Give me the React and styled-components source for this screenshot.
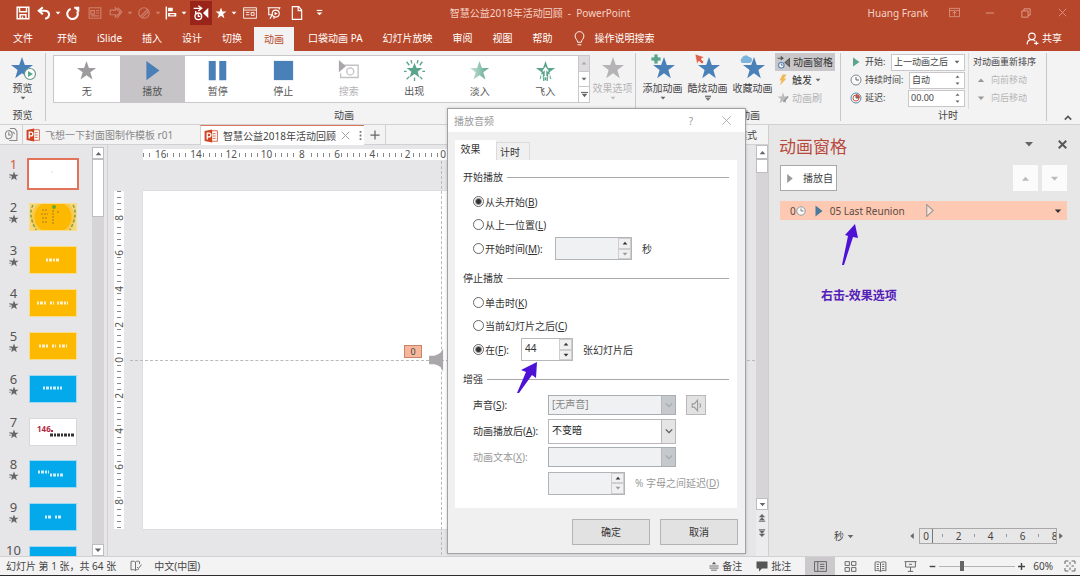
import React from 'react'
import styled, { createGlobalStyle, css } from 'styled-components'

const GlobalStyle = createGlobalStyle`
    * {
        box-sizing: border-box;
    }

    body {
        margin: 0;
        overflow: hidden;
        font: 10px/14px "Noto Sans", "Noto Sans CJK SC", sans-serif;
        color: #444;
    }

    button, input, select {
        font: inherit;
        color: inherit;
        margin: 0;
        padding: 0;
        border: 0;
        background: none;
        border-radius: 0;
    }

    svg {
        display: block;
        flex: none;
    }
`

const ORANGE = '#b7472a'
const BLUE = '#4a80b8'
const GREEN = '#5aa58c'

const Window = styled.div`
    display: flex;
    flex-direction: column;
    height: 100vh;
    background: #e6e5e7;
    border-bottom: 1px solid #2d2b2d;
    white-space: nowrap;
`

/* ---------- icons ---------- */

const STAR = '12,1 14.8,9 23,9 16.4,14 18.8,22.3 12,17.3 5.2,22.3 7.6,14 1,9 9.2,9'

const Icon = ({ size = 16, w, h, box = 24, children }) => (
    <svg width={w || size} height={h || size} viewBox={`0 0 ${box} ${box}`} fill="none" aria-hidden="true">
        {children}
    </svg>
)

const Star = ({ size, fill, children }) => (
    <Icon size={size}>
        <polygon points={STAR} fill={fill} />
        {children}
    </Icon>
)

const Caret = ({ up, size = 6, fill = '#666' }) => (
    <Icon size={size} box={10}>
        <path d={up ? 'M1 7.5h8L5 3z' : 'M1 3h8L5 7.5z'} fill={fill} />
    </Icon>
)

const Clock = ({ size = 13, red }) => (
    <Icon size={size}>
        <circle cx="12" cy="12" r="10" fill="#fafafa" stroke={red ? '#5b87ab' : '#7d8a94'} strokeWidth="2" />
        {red && <path d="M12 12V4a8 8 0 0 1 8 8z" fill="#d9573f" />}
        {red && <circle cx="12" cy="12" r="6" stroke="#d9573f" strokeWidth="2" />}
        <path d="M12 6v6h6" stroke="#666" strokeWidth="2" />
    </Icon>
)

const PptLogo = () => (
    <Icon size={14}>
        <path d="M12 3h11v18H12z" fill="#fff" stroke="#d2573a" strokeWidth="1.5" />
        <path d="M15 8h5M15 12h5M15 16h5" stroke="#d2573a" strokeWidth="1.5" />
        <path d="M1 3.5 14 1v22L1 20.5z" fill="#d04424" />
        <path d="M5.5 18V7h3a3 3 0 0 1 0 6.500h-3" stroke="#fff" strokeWidth="2.200" />
    </Icon>
)

/* ---------- title bar ---------- */

const TitleBar = styled.header`
    display: grid;
    grid-template-columns: 1fr auto 1fr;
    height: 27px;
    flex: none;
    background: ${ORANGE};
    color: #f6d3c7;
`

const QuickAccess = styled.div`
    display: flex;
    height: 25px;
    padding-left: 11px;
`

const QuickButton = styled.button`
    display: flex;
    align-items: center;
    justify-content: center;
    width: ${p => p.$w || 22}px;
    opacity: ${p => (p.disabled ? 0.3 : 1)};
    ${p => p.$on && css`
        margin: 1px 0 0 2px;
        background: #98241a;
    `}
`

const WindowTitle = styled.div`
    align-self: center;
    padding-bottom: 2px;
`

const WindowTools = styled.div`
    display: flex;
    justify-content: flex-end;
    align-items: center;
    padding-bottom: 2px;
`

const UserName = styled.span`
    margin-right: 8px;
`

const WindowButton = styled.button`
    display: flex;
    justify-content: center;
    width: 36px;
    opacity: 0.7;
`

const WHITE = { stroke: '#fff', strokeWidth: 2 }

const Title = () => (
    <TitleBar>
        <QuickAccess>
            <QuickButton $w={23} aria-label="保存">
                <Icon size={14}><path d="M2 2h20v20H2zM6 2v8h12V2M7 22v-7h10v7M11 18v4" {...WHITE} strokeWidth="2.500" /></Icon>
            </QuickButton>
            <QuickButton $w={20} aria-label="撤消">
                <Icon size={14}><path d="M10 2 3 8l7 6M4 8h9c10 0 10 12 1 14" {...WHITE} strokeWidth="3.500" /></Icon>
            </QuickButton>
            <QuickButton $w={8} aria-label="撤消列表"><Caret fill="#fff" /></QuickButton>
            <QuickButton aria-label="重复">
                <Icon size={14}><path d="M14 3h7v7M20 4c-1 1-2 3-2 3M8 5a9 9 0 1 0 11 4" {...WHITE} strokeWidth="3.500" /></Icon>
            </QuickButton>
            <QuickButton disabled aria-label="版式">
                <Icon size={14}><path d="M2 3h20v18H2zM5 8h6v6H5zM14 8h5M14 12h5M5 17h14" {...WHITE} /></Icon>
            </QuickButton>
            <QuickButton $w={20} disabled aria-label="形状">
                <Icon size={14}><path d="M2 7h9V3l8 8-8 8v-4H2zM15 3l7 7-8 11" {...WHITE} /></Icon>
            </QuickButton>
            <QuickButton $w={8} disabled aria-label="形状列表"><Caret fill="#fff" /></QuickButton>
            <QuickButton $w={20} disabled aria-label="轮廓">
                <Icon size={14}><circle cx="12" cy="12" r="9" {...WHITE} /><path d="M6 18 18 6M9 20 20 9" {...WHITE} /></Icon>
            </QuickButton>
            <QuickButton $w={8} disabled aria-label="轮廓列表"><Caret fill="#fff" /></QuickButton>
            <QuickButton $w={18} aria-label="对齐">
                <Icon size={14}><path d="M4 1v22" {...WHITE} strokeWidth="2.500" /><path d="M7 3h8v6H7zM7 12h14v6H7z" fill="#fff" /><path d="M10 14h8v2h-8z" fill={ORANGE} /></Icon>
            </QuickButton>
            <QuickButton $w={8} aria-label="对齐列表"><Caret fill="#fff" /></QuickButton>
            <QuickButton $on aria-label="动画窗格">
                <Icon size={16}>
                    <path d="M1 5h11M8 1l5 4-5 4M4 9v4" {...WHITE} />
                    <circle cx="8" cy="17" r="5" {...WHITE} />
                    <path d="M8 14v3h3" {...WHITE} />
                    <path d="M23 4v16l-8-8z" fill="#fff" />
                </Icon>
            </QuickButton>
            <QuickButton $w={18} aria-label="动画样式"><Star size={12} fill="#fff" /></QuickButton>
            <QuickButton $w={8} aria-label="动画样式列表"><Caret fill="#fff" /></QuickButton>
            <QuickButton $w={24} aria-label="选择窗格">
                <Icon size={14}><path d="M1 3h22v18H1zM1 7h22M5 11h6M5 15h6M14 11h5v5h-5z" {...WHITE} strokeWidth="1.500" /></Icon>
            </QuickButton>
            <QuickButton $w={24} aria-label="从头开始放映">
                <Icon size={14}><path d="M1 3h22M3 3v12h6M21 3v3M9 15l-4 7M12 19v3" {...WHITE} /><circle cx="15" cy="13" r="6" {...WHITE} /><path d="M13 10v6l5-3z" fill="#fff" /></Icon>
            </QuickButton>
            <QuickButton aria-label="新建">
                <Icon size={14}><path d="M4 1h11l5 6v16H4zM14 1v7h6" {...WHITE} /></Icon>
            </QuickButton>
            <QuickButton aria-label="自定义快速访问工具栏">
                <Icon size={7} box={10}><path d="M1 2h8" stroke="#fff" strokeWidth="1.500" /><path d="M1 5h8L5 9z" fill="#fff" /></Icon>
            </QuickButton>
        </QuickAccess>
        <WindowTitle>智慧公益2018年活动回顾 &nbsp;-&nbsp; PowerPoint</WindowTitle>
        <WindowTools>
            <UserName>Huang Frank</UserName>
            <WindowButton aria-label="功能区显示选项"><Icon size={11}><path d="M1 3h22v18H1zM1 8h22M12 19v-8M8 14l4-4 4 4" stroke="#f6d3c7" strokeWidth="1.500" /></Icon></WindowButton>
            <WindowButton aria-label="最小化"><Icon size={10}><path d="M2 12h20" stroke="#f6d3c7" strokeWidth="2" /></Icon></WindowButton>
            <WindowButton aria-label="还原"><Icon size={10}><path d="M2 7h15v15H2zM7 7V2h15v15h-5" stroke="#f6d3c7" strokeWidth="2" /></Icon></WindowButton>
            <WindowButton aria-label="关闭"><Icon size={9}><path d="m2 2 20 20M22 2 2 22" stroke="#f6d3c7" strokeWidth="2" /></Icon></WindowButton>
        </WindowTools>
    </TitleBar>
)

/* ---------- ribbon tabs ---------- */

const TabBar = styled.nav`
    display: flex;
    height: 24px;
    flex: none;
    padding: 0 18px 2px 3px;
    background: ${ORANGE};
    color: #fff;
`

const RibbonTab = styled.button`
    padding: 0 10px;
    ${p => p.$file && css`
        margin-right: 4px;
    `}
    ${p => p.$active && css`
        margin: 0 4px -2px 2px;
        background: #f4f3f4;
        color: ${ORANGE};
    `}
`

const TellMe = styled.button`
    display: flex;
    align-items: center;
    gap: 8px;
    margin-left: 9px;
`

const Share = styled(TellMe)`
    gap: 3px;
    margin-left: auto;
`

const TABS = ['文件', '开始', 'iSlide', '插入', '设计', '切换', '动画', '口袋动画 PA', '幻灯片放映', '审阅', '视图', '帮助']

const Tabs = () => (
    <TabBar>
        {TABS.map(name => (
            <RibbonTab key={name} $file={name === '文件'} $active={name === '动画'}>{name}</RibbonTab>
        ))}
        <TellMe>
            <Icon size={15}><path d="M9 18c0-4-4-5-4-10a7 7 0 0 1 14 0c0 5-4 6-4 10zM9 22h6" stroke="#fff" strokeWidth="1.500" /></Icon>
            操作说明搜索
        </TellMe>
        <Share>
            <Icon size={13}><circle cx="11" cy="8" r="6" stroke="#fff" strokeWidth="2" /><path d="M2 23c0-6 4-9 9-9 3 0 5 1 6 3M15 21h8M19 17v7" stroke="#fff" strokeWidth="2" /></Icon>
            共享
        </Share>
    </TabBar>
)

/* ---------- ribbon ---------- */

const RibbonBar = styled.section`
    display: flex;
    flex: none;
    height: 74px;
    background: #f4f3f4;
    border-bottom: 1px solid #d2d0d2;
`

const Group = styled.div`
    display: flex;
    flex-direction: column;
    flex: ${p => (p.$grow ? '1' : 'none')};
    min-width: 0;
    width: ${p => (p.$w ? p.$w + 'px' : 'auto')};
    margin: 2px 0 3px;
    padding-left: ${p => p.$pad || 0}px;
    border-right: 1px solid #c9c7c9;
`

const GroupBody = styled.div`
    display: flex;
    flex: 1;
    min-height: 0;
`

const GroupLabel = styled.div`
    line-height: 12px;
    text-align: center;
`

const BigButton = styled.button`
    display: flex;
    flex-direction: column;
    align-items: center;
    flex: none;
    width: 45px;
    line-height: 14px;
    color: ${p => (p.disabled ? '#b5b3b5' : '#444')};
`

const Gallery = styled.div`
    display: flex;
    flex: 1;
    height: 48px;
    margin-top: 2px;
    background: #fff;
    border: 1px solid #c9c7c9;
`

const Effect = styled.button`
    display: flex;
    flex-direction: column;
    align-items: center;
    flex: 1;
    gap: 3px;
    padding-top: 4px;
    color: ${p => (p.disabled ? '#b5b3b5' : '#555')};
    background: ${p => (p.$on ? '#c6c4c6' : 'none')};
`

const GalleryScroll = styled.div`
    display: flex;
    flex-direction: column;
    width: 11px;
    border-left: 1px solid #c9c7c9;
`

const ScrollStep = styled.button`
    display: flex;
    flex: 1;
    align-items: center;
    justify-content: center;
    background: ${p => (p.disabled ? '#dddbdd' : '#fff')};

    & + & {
        border-top: 1px solid #c9c7c9;
    }
`

const SmallButtons = styled.div`
    display: flex;
    flex-direction: column;
    width: 60px;
`

const SmallButton = styled.button`
    display: flex;
    align-items: center;
    gap: 3px;
    height: 18px;
    padding-left: 2px;
    color: ${p => (p.disabled ? '#b5b3b5' : '#333')};
    background: ${p => (p.$on ? '#c9c7c9' : 'none')};
`

const Timing = styled.div`
    display: flex;
    flex-direction: column;
    width: 115px;
    font-size: 9px;
`

const TimingRow = styled.label`
    display: flex;
    align-items: center;
    gap: 3px;
    height: 18px;
`

const TimingField = styled.span`
    display: flex;
    align-items: center;
    justify-content: space-between;
    width: ${p => p.$w}px;
    height: 17px;
    margin-left: auto;
    padding: 0 4px 0 2px;
    background: #fff;
    border: 1px solid #c9c7c9;

    input, select {
        flex: 1;
        min-width: 0;
        appearance: none;
        outline: none;
    }
`

const Stepper = styled.span`
    display: flex;
    flex-direction: column;
    gap: 2px;
`

const Reorder = styled.div`
    display: flex;
    flex-direction: column;
    margin-left: 3px;
    padding-left: 4px;
    border-left: 1px solid #dddbdd;
    font-size: 9px;
    line-height: 18px;
`

const ReorderButton = styled.button`
    display: flex;
    align-items: center;
    gap: 6px;
    height: 18px;
    padding-left: 4px;
    color: #b5b3b5;
`

const Collapse = styled.button`
    display: flex;
    align-self: flex-end;
    justify-content: flex-end;
    width: 33px;
    padding: 0 8px 2px 0;
`

const PlayShape = <path d="M5 1v22l15-11z" fill={BLUE} />

const EFFECTS = [
    { name: '无', icon: <Star size={21} fill="#9d9b9d" /> },
    { name: '播放', on: true, icon: <Icon size={21}>{PlayShape}</Icon> },
    { name: '暂停', icon: <Icon size={21}><path d="M2 1h8v22H2zM14 1h8v22h-8z" fill={BLUE} /></Icon> },
    { name: '停止', icon: <Icon size={21}><path d="M1 1h22v22H1z" fill={BLUE} /></Icon> },
    {
        name: '搜索',
        disabled: true,
        icon: (
            <Icon size={21}>
                <path d="M7 6h16v14H3v-5" stroke="#c3c1c3" strokeWidth="1.500" />
                <circle cx="14" cy="13" r="4" stroke="#c3c1c3" strokeWidth="1.500" />
                <path d="M1 0v14l8-7z" fill="#a9a7a9" />
            </Icon>
        ),
    },
    {
        name: '出现',
        icon: (
            <Icon size={21}>
                <polygon points="12,3 14.300,9.200 21,9.200 15.600,13.300 17.600,20 12,16 6.400,20 8.400,13.300 3,9.200 9.700,9.200" fill={GREEN} />
                <path d="m3 2 3 4M21 2l-3 4M0 13h3M21 13h3M3 22l3-3M21 22l-3-3M8 0l1 4M16 0l-1 4M12 20v4" stroke={GREEN} strokeWidth="1.500" />
            </Icon>
        ),
    },
    {
        name: '淡入',
        icon: (
            <Star size={21} fill="url(#fade)">
                <defs>
                    <linearGradient id="fade">
                        <stop offset="0" stopColor="#cfe4dc" />
                        <stop offset="1" stopColor="#5aa58c" />
                    </linearGradient>
                </defs>
            </Star>
        ),
    },
    {
        name: '飞入',
        icon: (
            <Star size={21} fill={GREEN}>
                <path d="M12 18V10M9 13l3-4 3 4M8 21v-5M16 21v-5" stroke="#fff" strokeWidth="1.800" />
                <path d="M10 24v-5M14 24v-5M12 23v-3" stroke={GREEN} strokeWidth="1.500" />
            </Star>
        ),
    },
]

const Ribbon = () => (
    <RibbonBar>
        <Group $w={46}>
            <GroupBody>
                <BigButton>
                    <Icon size={28} box={28}>
                        <polygon points={STAR} fill={BLUE} transform="translate(1 3)" />
                        <circle cx="21" cy="21" r="5.500" fill="#fff" stroke="#6a9a88" strokeWidth="1.200" />
                        <path d="M19 18v6l5-3z" fill={GREEN} />
                    </Icon>
                    预览
                    <Caret />
                </BigButton>
            </GroupBody>
            <GroupLabel>预览</GroupLabel>
        </Group>

        <Group $grow $pad={7}>
            <GroupBody>
                <Gallery>
                    {EFFECTS.map(e => (
                        <Effect key={e.name} $on={e.on} disabled={e.disabled}>
                            {e.icon}
                            {e.name}
                        </Effect>
                    ))}
                    <GalleryScroll>
                        <ScrollStep disabled aria-label="上一行"><Caret up fill="#aaa" /></ScrollStep>
                        <ScrollStep aria-label="下一行"><Caret /></ScrollStep>
                        <ScrollStep aria-label="其他"><Icon size={7} box={10}><path d="M0 2h10" stroke="#666" strokeWidth="1.500" /><path d="M1 4h8L5 9z" fill="#666" /></Icon></ScrollStep>
                    </GalleryScroll>
                </Gallery>
                <BigButton disabled>
                    <Icon size={28} box={28}><polygon points={STAR} fill="#b5b3b5" transform="translate(2 3)" /></Icon>
                    效果选项
                    <Caret fill="#bbb" />
                </BigButton>
            </GroupBody>
            <GroupLabel>动画</GroupLabel>
        </Group>

        <Group $w={205} $pad={4}>
            <GroupBody>
                <BigButton>
                    <Icon size={28} box={28}>
                        <polygon points={STAR} fill={BLUE} transform="translate(3 3)" />
                        <path d="M5 1h4v3h3v4H9v3H5V8H2V4h3z" fill={GREEN} stroke="#f4f3f4" strokeWidth=".8" />
                    </Icon>
                    添加动画
                    <Caret />
                </BigButton>
                <BigButton>
                    <Icon size={28} box={28}>
                        <polygon points={STAR} fill={BLUE} transform="translate(3 3)" />
                        <path d="m1 1 9 3-3 2 3 3-2 2-3-3-2 3z" fill="#e0604a" stroke="#f4f3f4" strokeWidth=".6" />
                    </Icon>
                    酷炫动画
                    <Icon size={6} box={10}><path d="M0 1h10v3H0z" fill="#777" /><path d="M1 5h8L5 10z" fill="#777" /></Icon>
                </BigButton>
                <BigButton>
                    <Icon size={28} box={28}>
                        <polygon points={STAR} fill={BLUE} transform="translate(3 3)" />
                        <path d="M3 10a3 3 0 0 1 0-5 4 4 0 0 1 7-1 3 3 0 0 1 0 6z" fill="#7db4dc" />
                    </Icon>
                    收藏动画
                </BigButton>
                <SmallButtons>
                    <SmallButton $on>
                        <Icon size={13}>
                            <path d="M1 4h10M7 1l4 3-4 3M23 5v14l-8-7z" stroke="#555" strokeWidth="2" fill="#777" />
                            <circle cx="8" cy="17" r="5" fill="#fff" stroke={BLUE} strokeWidth="2" />
                            <path d="M8 14v3h3" stroke="#555" strokeWidth="1.500" />
                        </Icon>
                        动画窗格
                    </SmallButton>
                    <SmallButton>
                        <Icon size={12}><path d="M11 1h8l-5 8h5L6 23l3-10H5z" fill="#f0b95a" /></Icon>
                        触发
                        <Caret />
                    </SmallButton>
                    <SmallButton disabled>
                        <Star size={12} fill="#bbb"><path d="m22 9-9 11" stroke="#8f8d8f" strokeWidth="2.500" /></Star>
                        动画刷
                    </SmallButton>
                </SmallButtons>
            </GroupBody>
            <GroupLabel>高级动画</GroupLabel>
        </Group>

        <Group $w={206} $pad={9}>
            <GroupBody>
                <Timing>
                    <TimingRow>
                        <Icon size={12}><path d="M6 3v18l13-9z" fill={GREEN} /></Icon>
                        开始:
                        <TimingField $w={74}>
                            <select><option>上一动画之后</option></select>
                            <Caret />
                        </TimingField>
                    </TimingRow>
                    <TimingRow>
                        <Clock size={12} />
                        持续时间:
                        <TimingField $w={56}>
                            <input defaultValue="自动" />
                            <Stepper><Caret up size={5} /><Caret size={5} /></Stepper>
                        </TimingField>
                    </TimingRow>
                    <TimingRow>
                        <Clock size={12} red />
                        延迟:
                        <TimingField $w={57}>
                            <input defaultValue="00.00" />
                            <Stepper><Caret up size={5} /><Caret size={5} /></Stepper>
                        </TimingField>
                    </TimingRow>
                </Timing>
                <Reorder>
                    对动画重新排序
                    <ReorderButton disabled><Caret up size={8} fill="#999" />向前移动</ReorderButton>
                    <ReorderButton disabled><Caret size={8} fill="#999" />向后移动</ReorderButton>
                </Reorder>
            </GroupBody>
            <GroupLabel>计时</GroupLabel>
        </Group>
        <Collapse aria-label="折叠功能区"><Icon size={8} box={10}><path d="m1 7 4-4 4 4" stroke="#555" strokeWidth="2" /></Icon></Collapse>
    </RibbonBar>
)

/* ---------- document tabs ---------- */

const Body = styled.div`
    display: flex;
    flex: 1;
    min-height: 0;
`

const Main = styled.main`
    display: flex;
    flex-direction: column;
    flex: 1;
    min-width: 0;
    border-right: 1px solid #cfcdcf;
`

const DocTabs = styled.div`
    display: flex;
    height: 20px;
    flex: none;
    background: #f4f3f4;
    border-bottom: 1px solid #d2d0d2;
`

const DocTab = styled.button`
    display: flex;
    align-items: center;
    gap: 5px;
    width: ${p => p.$w}px;
    padding-left: 3px;
    color: #888;
    border-left: 1px solid #d2d0d2;
    ${p => p.$active && css`
        background: #fff;
        color: #444;
        border-top: 1px solid #d9775c;
        margin-bottom: -1px;
    `}
`

const TabTool = styled.button`
    display: flex;
    align-items: center;
    justify-content: center;
    width: 22px;
    ${p => p.$line && css`
        border-right: 1px solid #d2d0d2;
    `}
`

const TabIcons = styled.span`
    display: flex;
    align-items: center;
    gap: 9px;
    margin-left: auto;
    padding-right: 5px;
`

const ModeButton = styled.button`
    margin-left: auto;
    padding-right: 11px;
`

/* ---------- slide list ---------- */

const Workspace = styled.div`
    display: flex;
    flex: 1;
    min-height: 0;
`

const SlidePanel = styled.aside`
    display: flex;
    width: 108px;
    flex: none;
    padding: 2px 3px 0 0;
    border-right: 1px solid #d2d0d2;
`

const SlideList = styled.ol`
    flex: 1;
    display: flex;
    flex-direction: column;
    margin: 0;
    padding: 6px 0 0;
    overflow: hidden;
    list-style: none;
`

const SlideItem = styled.li`
    display: flex;
    align-items: center;
    flex: 0 0 calc(100% / 9.4);
`

const SlideNumber = styled.span`
    display: flex;
    flex-direction: column;
    align-items: center;
    width: 27px;
    padding-bottom: 10px;
    font-size: 13px;
    line-height: 14px;
    color: ${p => (p.$current ? '#d2593c' : '#555')};
`

const Thumb = styled.span`
    width: 48px;
    height: 28px;
    margin-left: 2px;
    background: ${p => p.$color};
    border: 1px solid ${p => p.$edge};
    ${p => p.$current && css`
        width: 52px;
        height: 32px;
        margin-left: 0;
        border: 2px solid #e0735a;
    `}
`

const Count = styled.tspan`
    font-size: 8px;
    font-weight: 700;
`

const SCRIBBLE = { stroke: '#fff', strokeWidth: 3, strokeDasharray: '2 1 3 1', opacity: 0.8 }

const THUMB_ART = {
    1: <path d="M22 12h2" stroke="#ddd" />,
    2: (
        <>
            <path d="M0 0h46v26H0z" fill="#f7d777" />
            <ellipse cx="23" cy="13" rx="20" ry="18" fill="#fdb900" stroke="#f9c94e" strokeWidth="3" />
            <path d="M3 1c-4 7-2 16 3 25M43 1c4 7 2 16-3 25" stroke="#7aa04a" strokeWidth="1.500" strokeDasharray="3 2" />
            <path d="M12 6h6M11 10h7M12 14h5M12 18h6M23 6v14M27 8h3" stroke="#a8762a" strokeDasharray="2 1" />
            <circle cx="24" cy="3" r="2" fill="#6aa82e" />
        </>
    ),
    3: <path d="M16 13h13" {...SCRIBBLE} />,
    4: <path d="M7 13h10M20 13h4M27 13h11" {...SCRIBBLE} />,
    5: <path d="M9 13h9M22 13h4M29 13h8" {...SCRIBBLE} />,
    6: <path d="M13 12h19" {...SCRIBBLE} />,
    7: (
        <>
            <text x="7" y="13" fill="#b3273c"><Count>146</Count></text>
            <path d="M21 12h2" stroke="#b3273c" strokeWidth="2" />
            <path d="M20 16h24" stroke="#333" strokeWidth="3" strokeDasharray="3 1 2 1" />
        </>
    ),
    8: <path d="M8 11h11M20 14h14" {...SCRIBBLE} />,
    9: <path d="M15 13h7M25 13h7" {...SCRIBBLE} />,
    10: <path d="M10 12h26" {...SCRIBBLE} />,
}

const YELLOW = { color: '#fdb900', edge: '#f9dc8c' }
const SKY = { color: '#03a9ea', edge: '#9fd8ef' }
const PAPER = { color: '#fff', edge: '#d9d7d9' }
const SLIDES = [PAPER, YELLOW, YELLOW, YELLOW, YELLOW, SKY, PAPER, SKY, SKY, SKY]

const ScrollBar = styled.div`
    display: flex;
    flex-direction: column;
    width: 12px;
    flex: none;
    background: #d6d4d7;
`

const ScrollButton = styled.button`
    display: flex;
    align-items: center;
    justify-content: center;
    height: ${p => p.$h || 11}px;
    background: ${p => (p.$plain ? '#ecebed' : '#fff')};
    border: ${p => (p.$plain ? '0' : '1px solid #bfbdbf')};
`

const ScrollThumb = styled.div`
    height: ${p => p.$h}px;
    margin-bottom: auto;
    background: #fff;
    border: 1px solid #bfbdbf;
`

const Slides = () => (
    <SlidePanel>
        <SlideList>
            {SLIDES.map((slide, i) => (
                <SlideItem key={i}>
                    <SlideNumber $current={i === 0}>
                        {i + 1}
                        <Icon size={10}><polygon points={STAR} fill="#666" /><path d="M0 9h7M0 15h6" stroke="#888" strokeWidth="2" /></Icon>
                    </SlideNumber>
                    <Thumb $color={slide.color} $edge={slide.edge} $current={i === 0}>
                        <svg width="46" height="26" viewBox="0 0 46 26" fill="none" aria-hidden="true">{THUMB_ART[i + 1]}</svg>
                    </Thumb>
                </SlideItem>
            ))}
        </SlideList>
        <ScrollBar>
            <ScrollButton $h={12} aria-label="向上滚动"><Caret up size={7} /></ScrollButton>
            <ScrollThumb $h={58} />
            <ScrollButton $h={12} aria-label="向下滚动"><Caret size={8} /></ScrollButton>
        </ScrollBar>
    </SlidePanel>
)

/* ---------- editor ---------- */

const Editor = styled.section`
    display: flex;
    flex: 1;
    min-width: 0;
`

const Stage = styled.div`
    flex: 1;
    display: grid;
    grid-template-columns: 10px 1fr;
    grid-template-rows: 11px 1fr;
    gap: 31px 19px;
    padding: 4px 17px 27px 6px;
`

const ruler = css`
    display: flex;
    font-size: 10px;
    line-height: 11px;
    color: #555;
    background-color: #fff;
    background-repeat: no-repeat;
    background-position: center;
`

const RulerX = styled.div`
    ${ruler}
    grid-column: 2;
    margin-right: -4px;
    background-image: repeating-linear-gradient(90deg, #888 0 1px, transparent 1px 6px);
    background-size: 100% 4px;
`

const RulerY = styled.div`
    ${ruler}
    flex-direction: column;
    padding: 9px 0;
    background-image: repeating-linear-gradient(#888 0 1px, transparent 1px 6px);
    background-size: 4px 100%;
`

const Mark = styled.span`
    display: flex;
    flex: 1;
    align-items: center;
    justify-content: center;

    b {
        font-weight: 400;
        padding: 0 1px;
        background: #fff;
        ${p => p.$vertical && css`
            writing-mode: vertical-rl;
            transform: rotate(180deg);
            line-height: 10px;
            padding: 1px 0;
        `}
    }
`

const Slide = styled.div`
    position: relative;
    background: #fff;
    box-shadow: 0 0 1px #aaa;
`

const GuideX = styled.div`
    position: absolute;
    top: 50%;
    left: -13px;
    right: -16px;
    border-top: 1px dashed #bbb9bb;
`

const GuideY = styled.div`
    position: absolute;
    left: 50%;
    top: -30px;
    bottom: -26px;
    border-left: 1px dashed #bbb9bb;
`

const OrderBadge = styled.div`
    position: absolute;
    top: calc(50% - 15px);
    left: calc(50% - 37px);
    width: 18px;
    height: 13px;
    line-height: 11px;
    text-align: center;
    font-size: 9px;
    background: #f7b79c;
    border: 1px solid #c98468;
`

const AudioObject = styled.div`
    position: absolute;
    top: calc(50% - 13px);
    left: calc(50% - 13px);
`

const range = max => Array.from({ length: max + 1 }, (_, i) => Math.abs(max - i * 2))

const SlideEditor = () => (
    <Editor>
        <Stage>
            <RulerX>{range(16).map((n, i) => <Mark key={i}><b>{n}</b></Mark>)}</RulerX>
            <RulerY>{range(8).map((n, i) => <Mark key={i} $vertical><b>{n}</b></Mark>)}</RulerY>
            <Slide>
                <GuideX />
                <GuideY />
                <OrderBadge>0</OrderBadge>
                <AudioObject>
                    <Icon size={26}><path d="M1 8h5c4-1 7-3 8-7v22c-1-4-4-6-8-7H1z" fill="#a9a7a9" /></Icon>
                </AudioObject>
            </Slide>
        </Stage>
        <ScrollBar>
            <ScrollButton $h={14} aria-label="向上滚动"><Caret up size={7} /></ScrollButton>
            <ScrollThumb $h={14} />
            <ScrollButton $h={12} aria-label="向下滚动"><Caret size={7} /></ScrollButton>
            <ScrollButton $plain $h={15} aria-label="上一张幻灯片"><Icon size={8} box={10}><path d="M1 4h8L5 0zM1 8h8L5 4z" fill="#666" /><path d="M1 9.500h8" stroke="#666" /></Icon></ScrollButton>
            <ScrollButton $plain $h={15} aria-label="下一张幻灯片"><Icon size={8} box={10}><path d="M1 2h8L5 6zM1 6h8l-4 4z" fill="#666" /><path d="M1 .5h8" stroke="#666" /></Icon></ScrollButton>
            <ScrollButton as="span" $plain $h={16} />
        </ScrollBar>
    </Editor>
)

/* ---------- animation pane ---------- */

const Pane = styled.aside`
    display: flex;
    flex-direction: column;
    flex: none;
    width: 311px;
    padding: 11px 13px 12px 11px;
    background: #e8e7e8;
`

const PaneHeader = styled.div`
    display: flex;
    align-items: center;
    gap: 24px;
    height: 22px;
    margin-bottom: 7px;

    h2 {
        margin: 0 auto 0 -1px;
        font-size: 17px;
        font-weight: 400;
        line-height: 22px;
        color: #b84a3c;
    }

    button {
        padding-bottom: 6px;
    }
`

const PaneTools = styled.div`
    display: flex;
    gap: 4px;
    height: 26px;
    margin-bottom: 10px;
`

const PlayFrom = styled.button`
    display: flex;
    align-items: center;
    gap: 8px;
    width: 57px;
    margin-right: auto;
    padding-left: 3px;
    background: #fff;
    border: 1px solid #a9a7a9;
`

const MoveButton = styled.button`
    display: flex;
    align-items: center;
    justify-content: center;
    width: 25px;
    background: #fbfbfb;
`

const AnimationItem = styled.button`
    display: flex;
    align-items: center;
    height: 19px;
    padding: 0 5px 0 10px;
    background: #fdc9b2;
    color: #5c4a44;
`

const ItemName = styled.span`
    margin: 0 19px 0 6px;
`

const ItemPlay = styled.span`
    margin-left: 6px;
`

const ItemCaret = styled.span`
    margin-left: auto;
`

const Timeline = styled.div`
    display: flex;
    align-items: center;
    margin-top: auto;
    padding-right: 3px;
`

const UnitButton = styled.button`
    display: flex;
    align-items: center;
    gap: 3px;
    margin: 0 auto 0 54px;
`

const Scale = styled.div`
    display: flex;
    width: 138px;
    height: 16px;
    margin: 0 1px 0 4px;
    overflow: hidden;
    line-height: 14px;
    border: 1px solid #a9a7a9;
`

const ScaleMark = styled.span`
    flex: 0 0 32px;
    display: flex;
    justify-content: space-between;

    i {
        width: 13px;
        text-align: center;
        font-style: normal;
    }

    &:first-child i {
        border-right: 1px solid #777;
    }

    &::after {
        content: "";
        width: 1px;
        height: 3px;
        margin: 5px 9px 0 0;
        background: #999;
    }
`

const AnimationPane = () => (
    <Pane>
        <PaneHeader>
            <h2>动画窗格</h2>
            <button aria-label="任务窗格选项"><Caret size={10} /></button>
            <button aria-label="关闭窗格"><Icon size={9}><path d="m2 2 20 20M22 2 2 22" stroke="#555" strokeWidth="5" /></Icon></button>
        </PaneHeader>
        <PaneTools>
            <PlayFrom><Icon size={11}><path d="M7 2v20l12-10z" fill="#999" /></Icon>播放自</PlayFrom>
            <MoveButton disabled aria-label="上移"><Caret up size={9} fill="#bbb" /></MoveButton>
            <MoveButton disabled aria-label="下移"><Caret size={9} fill="#bbb" /></MoveButton>
        </PaneTools>
        <AnimationItem>
            0
            <Clock size={10} />
            <ItemPlay><Icon size={12}><path d="M7 1v22l14-11z" fill="#4a7a9c" /></Icon></ItemPlay>
            <ItemName>05 Last Reunion</ItemName>
            <Icon size={13}><path d="M5 1v22l12-11z" fill="#fbe0d5" stroke="#999" strokeWidth="2" /></Icon>
            <ItemCaret><Caret size={8} fill="#333" /></ItemCaret>
        </AnimationItem>
        <Timeline>
            <UnitButton>秒<Caret size={7} /></UnitButton>
            <Icon size={6} box={10}><path d="M8 0v10L2 5z" fill="#666" /></Icon>
            <Scale>
                {[0, 2, 4, 6, 8].map(n => <ScaleMark key={n}><i>{n}</i></ScaleMark>)}
            </Scale>
            <Icon size={6} box={10}><path d="M2 0v10l6-5z" fill="#666" /></Icon>
        </Timeline>
    </Pane>
)

/* ---------- status bar ---------- */

const StatusBar = styled.footer`
    display: flex;
    align-items: center;
    height: 19px;
    flex: none;
    padding: 0 4px 0 6px;
    background: #f4f3f4;
    border-top: 1px solid #d2d0d2;
`

const StatusButton = styled.button`
    display: flex;
    align-items: center;
    gap: 3px;
    margin-left: ${p => p.$ml || 0}px;
`

const Views = styled.div`
    display: flex;
    align-self: stretch;
    margin-left: 14px;
`

const ViewButton = styled.button`
    display: flex;
    align-items: center;
    justify-content: center;
    width: 30px;
    background: ${p => (p.$on ? '#cbc9cb' : 'none')};
`

const Push = styled.span`
    margin-left: auto;
`

const Zoom = styled.input`
    appearance: none;
    width: 76px;
    height: 14px;
    margin: 0 3px;
    background: linear-gradient(#b5b3b5, #b5b3b5) center / 100% 1px no-repeat;

    &::-webkit-slider-thumb {
        appearance: none;
        width: 4px;
        height: 10px;
        background: #666;
    }
`

const Status = () => (
    <StatusBar>
        <span>幻灯片 第 1 张，共 64 张</span>
        <StatusButton $ml={14} aria-label="拼写检查">
            <Icon size={12}><path d="M11 4C8 2 5 2 2 3v17c3-1 6-1 9 1 2-2 4-2 6-2M11 4v17M11 4c2-2 5-2 8-1v5M14 14l3 3 6-8" stroke="#666" strokeWidth="1.800" /></Icon>
        </StatusButton>
        <StatusButton $ml={12}>中文(中国)</StatusButton>
        <Push />
        <StatusButton><Icon size={10}><path d="M1 12h22M1 17h22M5 22h14" stroke="#555" strokeWidth="2" /><path d="m7 8 5-6 5 6z" fill="#555" /></Icon>备注</StatusButton>
        <StatusButton $ml={14}><Icon size={12}><path d="M1 3h22v14H12l-6 6v-6H1z" fill="#555" /></Icon>批注</StatusButton>
        <Views>
            <ViewButton $on aria-label="普通视图"><Icon size={13}><path d="M1 3h22v18H1zM7 3v18M11 8h8M11 12h8M11 16h8" stroke="#666" strokeWidth="1.800" /></Icon></ViewButton>
            <ViewButton aria-label="幻灯片浏览"><Icon size={13}><path d="M2 3h8v7H2zM14 3h8v7h-8zM2 14h8v7H2zM14 14h8v7h-8z" stroke="#666" strokeWidth="1.800" /></Icon></ViewButton>
            <ViewButton aria-label="阅读视图"><Icon size={13}><path d="M12 5C9 3 5 3 2 4v16c3-1 7-1 10 1 3-2 7-2 10-1V4c-3-1-7-1-10 1v16M5 8h4M5 12h4M5 16h4M15 8h4M15 12h4M15 16h4" stroke="#666" strokeWidth="1.800" /></Icon></ViewButton>
            <ViewButton aria-label="幻灯片放映"><Icon size={13}><path d="M1 3h22M3 3v10h18V3M12 13v8M7 21h10M9 8h6" stroke="#666" strokeWidth="1.800" /></Icon></ViewButton>
        </Views>
        <StatusButton $ml={4} aria-label="缩小"><Icon size={7} box={10}><path d="M1 5h8" stroke="#444" strokeWidth="2" /></Icon></StatusButton>
        <Zoom type="range" min="10" max="180" defaultValue="60" aria-label="缩放" />
        <StatusButton aria-label="放大"><Icon size={7} box={10}><path d="M0 5h10M5 0v10" stroke="#444" strokeWidth="2" /></Icon></StatusButton>
        <StatusButton $ml={8}>60%</StatusButton>
        <StatusButton $ml={11} aria-label="适应窗口"><Icon size={12}><path d="M2 8V2h7M15 2h7v6M22 16v6h-7M9 22H2v-6M12 4v5M12 15v5M4 12h5M15 12h5" stroke="#666" strokeWidth="2" /></Icon></StatusButton>
    </StatusBar>
)

/* ---------- audio dialog ---------- */

const Dialog = styled.form`
    position: absolute;
    top: 108px;
    left: 447px;
    width: 299px;
    background: #f1f0f1;
    border: 1px solid #a3a1a3;
    box-shadow: 0 0 3px #0003;
    color: #333;
`

const DialogTitle = styled.div`
    display: flex;
    align-items: center;
    height: 23px;
    padding: 0 14px 0 6px;
    background: #fff;
    color: #999;

    span {
        margin-right: auto;
    }

    button + button {
        margin-left: 29px;
    }
`

const DialogTabs = styled.div`
    display: flex;
    align-items: flex-end;
    height: 28px;
    padding: 0 7px;
`

const DialogTab = styled.button`
    width: ${p => (p.$active ? 41 : 34)}px;
    height: ${p => (p.$active ? 20 : 18)}px;
    padding-right: 6px;
    border: 1px solid #dcdadc;
    border-bottom: 0;
    ${p => p.$active && css`
        padding: 0 10px 3px 0;
        background: #fff;
        border-color: #fff;
    `}
`

const DialogPanel = styled.div`
    margin: 0 8px 11px 7px;
    padding: 8px 8px 12px;
    background: #fff;
`

const Section = styled.fieldset`
    min-width: 0;
    margin: 0;
    padding: 0;
    border: 0;

    & + & {
        margin-top: 8px;
    }
`

const SectionTitle = styled.legend`
    display: flex;
    align-items: center;
    gap: 4px;
    width: 100%;
    height: 18px;
    margin-bottom: 4px;
    padding: 0;

    &::after {
        content: "";
        flex: 1;
        height: 1px;
        background: #a9a7a9;
    }
`

const Row = styled.div`
    display: flex;
    align-items: center;
    height: ${p => p.$h || 23}px;
    padding-left: 10px;
    color: ${p => (p.$off ? '#999' : 'inherit')};
`

const Radio = styled.input`
    appearance: none;
    width: 11px;
    height: 11px;
    margin-right: 1px;
    border: 1px solid #666;
    border-radius: 50%;

    &:checked {
        background: radial-gradient(#333 0 2px, #fff 4px);
    }
`

const FieldLabel = styled.label`
    width: ${p => (p.$w ? p.$w + 'px' : 'auto')};
`

const Spin = styled.span`
    display: flex;
    width: ${p => p.$w}px;
    height: 23px;
    margin-right: 10px;
    background: ${p => (p.$off ? '#eff1f2' : '#fff')};
    border: 1px solid ${p => (p.$off ? '#b1b5b8' : '#b9b7b9')};

    input {
        flex: 1;
        min-width: 0;
        padding: 0 0 3px 3px;
    }
`

const SpinButtons = styled.span`
    display: flex;
    flex-direction: column;
    width: 13px;

    button {
        display: flex;
        flex: 1;
        align-items: center;
        justify-content: center;
        background: #f1f0f1;
        border: 1px solid #cfcdcf;
    }
`

const Combo = styled.span`
    display: flex;
    width: 128px;
    height: ${p => (p.$off ? 20 : 25)}px;
    margin-right: 10px;
    color: ${p => (p.$off ? '#888' : '#222')};
    background: ${p => (p.$off ? '#eff1f2' : '#fff')};
    border: 1px solid ${p => (p.$off ? '#a9aeb3' : '#b9b7b9')};

    select {
        flex: 1;
        appearance: none;
        padding: 0 0 3px 3px;
        opacity: 1;
    }
`

const ComboArrow = styled.span`
    display: flex;
    align-items: center;
    justify-content: center;
    width: 14px;
    background: ${p => (p.$off ? '#c5c9cd' : '#e6e5e6')};
    border-left: 1px solid #b9b7b9;
`

const SoundButton = styled.button`
    display: flex;
    align-items: center;
    justify-content: center;
    width: 20px;
    height: 20px;
    background: #e3e2e3;
    border: 1px solid #b9b7b9;
`

const DialogFooter = styled.div`
    display: flex;
    justify-content: flex-end;
    gap: 10px;
    padding: 0 7px 8px;
`

const DialogButton = styled.button`
    width: 78px;
    height: 26px;
    background: #e3e2e3;
    border: 1px solid #b5b3b5;
`

const Key = ({ children }) => <>(<u>{children}</u>)</>

const SpinBox = ({ id, w, off, value, label }) => (
    <Spin $w={w} $off={off}>
        <input id={id} defaultValue={value} disabled={off} aria-label={label} />
        <SpinButtons>
            <button type="button" disabled={off} aria-label="增加"><Caret up size={6} fill="#333" /></button>
            <button type="button" disabled={off} aria-label="减少"><Caret size={6} fill={off ? '#999' : '#333'} /></button>
        </SpinButtons>
    </Spin>
)

const ComboBox = ({ id, off, value }) => (
    <Combo $off={off}>
        <select id={id} disabled={off}><option>{value}</option></select>
        <ComboArrow $off={off}>
            <Icon size={8} box={10}><path d="m1 3 4 4 4-4" stroke={off ? '#a5a9ad' : '#555'} strokeWidth="1.500" /></Icon>
        </ComboArrow>
    </Combo>
)

const AudioDialog = () => (
    <Dialog onSubmit={e => e.preventDefault()}>
        <DialogTitle>
            <span>播放音频</span>
            <button type="button" aria-label="帮助">?</button>
            <button type="button" aria-label="关闭"><Icon size={9}><path d="m1 1 22 22M23 1 1 23" stroke="#999" strokeWidth="2" /></Icon></button>
        </DialogTitle>
        <DialogTabs>
            <DialogTab type="button" $active>效果</DialogTab>
            <DialogTab type="button">计时</DialogTab>
        </DialogTabs>
        <DialogPanel>
            <Section>
                <SectionTitle>开始播放</SectionTitle>
                <Row><Radio type="radio" name="start" id="s1" defaultChecked /><label htmlFor="s1">从头开始<Key>B</Key></label></Row>
                <Row><Radio type="radio" name="start" id="s2" /><label htmlFor="s2">从上一位置<Key>L</Key></label></Row>
                <Row $h={25}>
                    <Radio type="radio" name="start" id="s3" />
                    <FieldLabel htmlFor="s3" $w={70}>开始时间<Key>M</Key>:</FieldLabel>
                    <SpinBox w={77} off label="开始时间" />
                    秒
                </Row>
            </Section>
            <Section>
                <SectionTitle>停止播放</SectionTitle>
                <Row><Radio type="radio" name="stop" id="e1" /><label htmlFor="e1">单击时<Key>K</Key></label></Row>
                <Row><Radio type="radio" name="stop" id="e2" /><label htmlFor="e2">当前幻灯片之后<Key>C</Key></label></Row>
                <Row $h={25}>
                    <Radio type="radio" name="stop" id="e3" defaultChecked />
                    <FieldLabel htmlFor="e3" $w={36}>在<Key>F</Key>:</FieldLabel>
                    <SpinBox w={52} value="44" label="幻灯片数" />
                    张幻灯片后
                </Row>
            </Section>
            <Section>
                <SectionTitle>增强</SectionTitle>
                <Row $h={26}>
                    <FieldLabel htmlFor="sound" $w={75}>声音<Key>S</Key>:</FieldLabel>
                    <ComboBox id="sound" off value="[无声音]" />
                    <SoundButton type="button" disabled aria-label="音量">
                        <Icon size={13}><path d="M4 9h4l6-7v20l-6-7H4zM18 8c2 3 2 5 0 8" stroke="#999" strokeWidth="2" /></Icon>
                    </SoundButton>
                </Row>
                <Row $h={26}>
                    <FieldLabel htmlFor="after" $w={75}>动画播放后<Key>A</Key>:</FieldLabel>
                    <ComboBox id="after" value="不变暗" />
                </Row>
                <Row $h={26} $off>
                    <FieldLabel htmlFor="anim-text" $w={75}>动画文本<Key>X</Key>:</FieldLabel>
                    <ComboBox id="anim-text" off value="" />
                </Row>
                <Row $h={26} $off>
                    <FieldLabel as="span" $w={75} />
                    <SpinBox id="delay" w={77} off />
                    <label htmlFor="delay">% 字母之间延迟<Key>D</Key></label>
                </Row>
            </Section>
        </DialogPanel>
        <DialogFooter>
            <DialogButton type="submit">确定</DialogButton>
            <DialogButton type="button">取消</DialogButton>
        </DialogFooter>
    </Dialog>
)

/* ---------- hints drawn over the window ---------- */

const Arrow = styled.svg`
    position: absolute;
    left: ${p => p.$x}px;
    top: ${p => p.$y}px;
`

const Hint = styled.div`
    position: absolute;
    left: 821px;
    top: 288px;
    font-size: 12px;
    line-height: 16px;
    font-weight: 700;
    color: #5420b8;
`

const App = () => (
    <Window>
        <GlobalStyle />
        <Title />
        <Tabs />
        <Ribbon />
        <Body>
            <Main>
                <DocTabs>
                    <TabTool aria-label="最近文档"><Icon size={13}><path d="M9 1h9l4 5v17H8M1 12a6 6 0 0 1 12-2c1 6-2 10-7 10-3 0-5-3-5-8z" stroke="#888" strokeWidth="2" /><path d="M7 8v5h4M14 7l4 4" stroke="#888" strokeWidth="2" /></Icon></TabTool>
                    <DocTab $w={178}><PptLogo />飞想一下封面图制作模板 r01</DocTab>
                    <DocTab as="div" $w={164} $active>
                        <PptLogo />
                        智慧公益2018年活动回顾
                        <TabIcons>
                            <Icon size={9}><path d="m2 2 20 20M22 2 2 22" stroke="#999" strokeWidth="2.500" /></Icon>
                            <Icon size={3} h={11} box={10}><path d="M2-10h6v6H2zM2 2h6v6H2zM2 14h6v6H2z" fill="#777" /></Icon>
                        </TabIcons>
                    </DocTab>
                    <TabTool $line aria-label="新建标签"><Icon size={10}><path d="M12 1v22M1 12h22" stroke="#666" strokeWidth="3" /></Icon></TabTool>
                    <ModeButton>标签模式</ModeButton>
                </DocTabs>
                <Workspace>
                    <Slides />
                    <SlideEditor />
                </Workspace>
            </Main>
            <AnimationPane />
        </Body>
        <Status />
        <AudioDialog />
        <Arrow $x={515} $y={361} width="24" height="34" viewBox="0 0 24 34" aria-hidden="true">
            <path d="M22 1 21 17 17 14 4 32 2 32 11 11 6 9z" fill="#4d12d6" />
        </Arrow>
        <Arrow $x={840} $y={222} width="20" height="46" viewBox="0 0 20 46" aria-hidden="true">
            <path d="M15 2 18 16 13 15 4 43 2 43 8 14 5 13z" fill="#4d12d6" />
        </Arrow>
        <Hint>右击-效果选项</Hint>
    </Window>
)

export default App
